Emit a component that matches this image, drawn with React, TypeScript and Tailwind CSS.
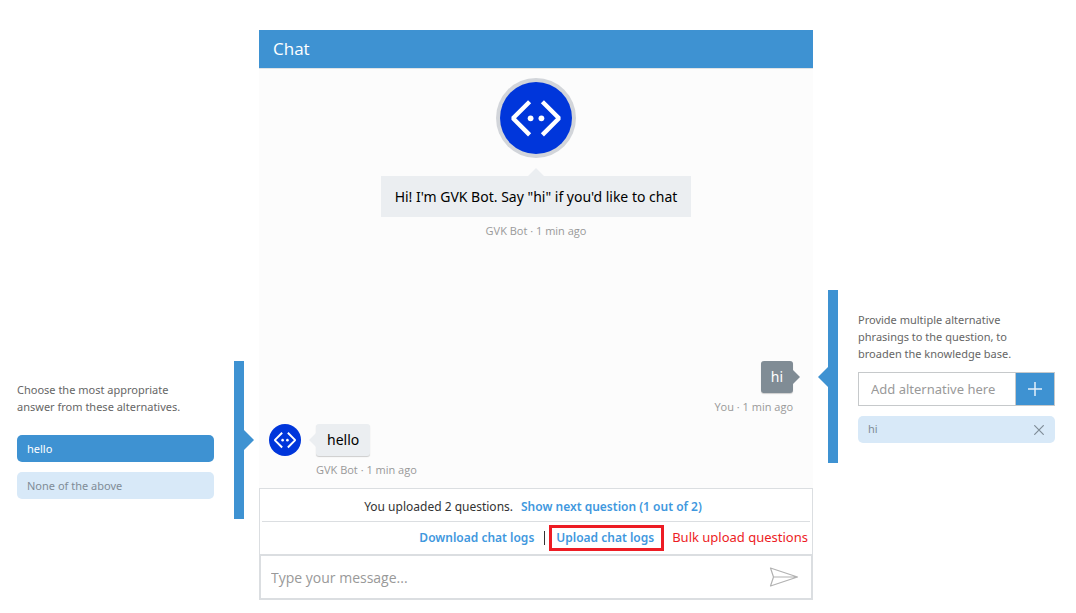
import { useState } from "react";

function BotAvatar({ className }: { className: string }) {
  return (
    <svg viewBox="0 0 72 72" className={className} role="img" aria-label="GVK Bot">
      <circle cx="36" cy="36" r="36" fill="#0036db" />
      <g fill="none" stroke="#fff" strokeWidth="4.4" strokeLinecap="butt" strokeLinejoin="bevel">
        <path d="M29.6 19.7 13 36.3 29.6 52.9" />
        <path d="M42.4 19.7 59 36.3 42.4 52.9" />
      </g>
      <circle cx="30.6" cy="36.3" r="2.9" fill="#fff" />
      <circle cx="41.4" cy="36.3" r="2.9" fill="#fff" />
    </svg>
  );
}

function Caption({ children }: { children: string }) {
  return <p className="text-[11px] leading-4 text-[#999999]">{children}</p>;
}

function AnswerPanel() {
  const [picked, setPicked] = useState("hello");
  const answers = ["hello", "None of the above"];
  return (
    <aside className="mt-[361px] flex shrink-0 items-stretch gap-5 pl-[17px] pr-[15px]">
      <div className="w-[197px] py-5">
        <p className="font-['Noto_Sans',sans-serif] text-[11px] leading-[17px] text-[#666666]">
          Choose the most appropriate
          <br />
          answer from these alternatives.
        </p>
        <div className="mt-5 flex flex-col gap-2.5">
          {answers.map((a) => (
            <button
              key={a}
              type="button"
              aria-pressed={picked === a}
              onClick={() => setPicked(a)}
              className={
                picked === a
                  ? "h-[27px] rounded-[5px] bg-[#3e92d2] px-2.5 pt-0.5 text-left font-['Noto_Sans',sans-serif] text-[11px] text-white"
                  : "h-[27px] rounded-[5px] bg-[#d8e9f8] px-2.5 pt-0.5 text-left font-['Noto_Sans',sans-serif] text-[11px] text-[#7f8c97]"
              }
            >
              {a}
            </button>
          ))}
        </div>
      </div>
      <div className="relative w-2.5 bg-[#3e92d2]">
        <svg viewBox="0 0 10 20" className="absolute left-full top-1/2 h-5 w-2.5 -translate-y-1/2" aria-hidden="true">
          <path d="M0 0 10 10 0 20Z" fill="#3e92d2" />
        </svg>
      </div>
    </aside>
  );
}

function PhrasingPanel() {
  return (
    <aside className="mt-[290px] flex shrink-0 items-stretch gap-5 pl-[15px] pr-[21px]">
      <div className="relative w-2.5 bg-[#3e92d2]">
        <svg viewBox="0 0 10 20" className="absolute right-full top-1/2 h-5 w-2.5 -translate-y-1/2" aria-hidden="true">
          <path d="M10 0 0 10 10 20Z" fill="#3e92d2" />
        </svg>
      </div>
      <div className="w-[197px] py-5">
        <label
          htmlFor="alternative"
          className="block pt-px font-['Noto_Sans',sans-serif] text-[11px] leading-[17px] text-[#666666]"
        >
          Provide multiple alternative
          <br />
          phrasings to the question, to
          <br />
          broaden the knowledge base.
        </label>
        <div className="mt-2.5 flex h-[34px] border border-[#c6c9cb]">
          <input
            id="alternative"
            type="text"
            placeholder="Add alternative here"
            className="min-w-0 flex-1 bg-white pl-3 pt-0.5 font-['Noto_Sans',sans-serif] text-[13px] text-black outline-none placeholder:text-[#999999]"
          />
          <button type="button" aria-label="Add" className="flex w-[39px] items-center justify-center border-l border-[#c6c9cb] bg-[#3e92d2]">
            <svg viewBox="0 0 14 14" className="size-3.5" aria-hidden="true">
              <path d="M7 0V14M0 7H14" stroke="#e4f0fa" strokeWidth="1.5" />
            </svg>
          </button>
        </div>
        <div className="mt-2.5 flex h-[27px] items-center justify-between rounded-[5px] bg-[#d8e9f8] px-2.5 font-['Noto_Sans',sans-serif] text-[11px] text-[#7f8c97]">
          hi
          <button type="button" aria-label="Remove hi" className="flex size-3 items-center justify-center">
            <svg viewBox="0 0 10 10" className="size-2.5" aria-hidden="true">
              <path d="M.3 .3 9.7 9.7M9.7 .3 .3 9.7" stroke="#7f8c97" strokeWidth="1.2" />
            </svg>
          </button>
        </div>
      </div>
    </aside>
  );
}

function Chat() {
  return (
    <main className="mt-[30px] flex min-w-0 flex-1 flex-col">
      <h1 className="h-[39px] border-b border-[#dfe2e5] bg-[#3e92d2] px-3.5 text-[17px] leading-[38px] text-white">Chat</h1>

      <section className="bg-[#fcfcfc] px-2.5 pb-2.5">
        <div className="flex flex-col items-center pt-[9px]">
          <div className="rounded-full bg-[#d2d5da] p-1">
            <BotAvatar className="size-[72px]" />
          </div>
          <svg viewBox="0 0 16 8" className="mt-2.5 h-2 w-4" aria-hidden="true">
            <path d="M0 8 8 0 16 8Z" fill="#ebeef1" />
          </svg>
          <p className="mb-1.5 bg-[#ebeef1] px-3.5 font-['Noto_Sans',sans-serif] text-[14px] leading-[41px] text-black">
            Hi! I'm GVK Bot. Say "hi" if you'd like to chat
          </p>
          <Caption>GVK Bot · 1 min ago</Caption>
        </div>

        <div className="mt-[122px] flex flex-col items-end pr-2.5">
          <p className="relative mb-1.5 rounded-[3px] bg-[#808c95] px-2.5 font-['Noto_Sans',sans-serif] text-[14px] leading-8 text-white shadow-[0_1px_1px_#cccccc]">
            hi
            <svg viewBox="0 0 7 14" className="absolute left-full top-1/2 h-3.5 w-[7px] -translate-y-1/2" aria-hidden="true">
              <path d="M0 0 7 7 0 14Z" fill="#808c95" />
            </svg>
          </p>
          <Caption>You · 1 min ago</Caption>
        </div>

        <div className="mt-[9px] flex gap-[15px]">
          <BotAvatar className="size-8" />
          <div className="flex flex-col items-start">
            <p className="relative mb-1.5 rounded-[3px] bg-[#ebeef1] px-[11px] font-['Noto_Sans',sans-serif] text-[14px] leading-8 text-black shadow-[0_1px_1px_#cccccc]">
              hello
              <svg viewBox="0 0 7 14" className="absolute right-full top-1/2 h-3.5 w-[7px] -translate-y-1/2" aria-hidden="true">
                <path d="M7 0 0 7 7 14Z" fill="#ebeef1" />
              </svg>
            </p>
            <Caption>GVK Bot · 1 min ago</Caption>
          </div>
        </div>
      </section>

      <section className="border-x border-t border-[#dbdee1] bg-white px-0.5 font-['Noto_Sans',sans-serif] text-[12px] text-[#333333]">
        <div className="flex h-[33px] items-center justify-center gap-2 border-b border-[#dbdee1] pr-1.5 pt-1">
          <span>You uploaded 2 questions.</span>
          <a href="#next" className="font-semibold text-[#3f98de]">
            Show next question (1 out of 2)
          </a>
        </div>
        <div className="flex h-8 items-center justify-end">
          <a href="#download" className="font-semibold text-[#3f98de]">
            Download chat logs
          </a>
          <span className="ml-2.5 h-3.5 w-px bg-[#333333]" />
          <a
            href="#upload"
            className="ml-1 flex h-[26px] items-center border-3 border-[#ed1c24] pl-1 pr-[7px] font-semibold text-[#3f98de]"
          >
            Upload chat logs
          </a>
          <a href="#bulk" className="ml-2 pr-0.5 text-[13px] text-[#ed1c24]">
            Bulk upload questions
          </a>
        </div>
      </section>

      <form className="flex h-[46px] items-center border-2 border-[#dbdee1] bg-white pl-2.5 pr-3" onSubmit={(e) => e.preventDefault()}>
        <input
          type="text"
          aria-label="Message"
          placeholder="Type your message..."
          className="min-w-0 flex-1 text-[14px] text-black outline-none placeholder:text-[#999999]"
        />
        <button type="submit" aria-label="Send">
          <svg viewBox="0 0 30 20" className="h-5 w-[30px]" fill="none" stroke="#b2b2b2" strokeWidth="1.2" strokeLinejoin="round" aria-hidden="true">
            <path d="M1.5 1 28.5 10 1.5 19 4.5 10ZM4.5 10H28.5" />
          </svg>
        </button>
      </form>
    </main>
  );
}

export default function App() {
  return (
    <div className="flex min-h-screen items-start bg-white font-['Open_Sans','Noto_Sans',sans-serif]">
      <AnswerPanel />
      <Chat />
      <PhrasingPanel />
    </div>
  );
}
